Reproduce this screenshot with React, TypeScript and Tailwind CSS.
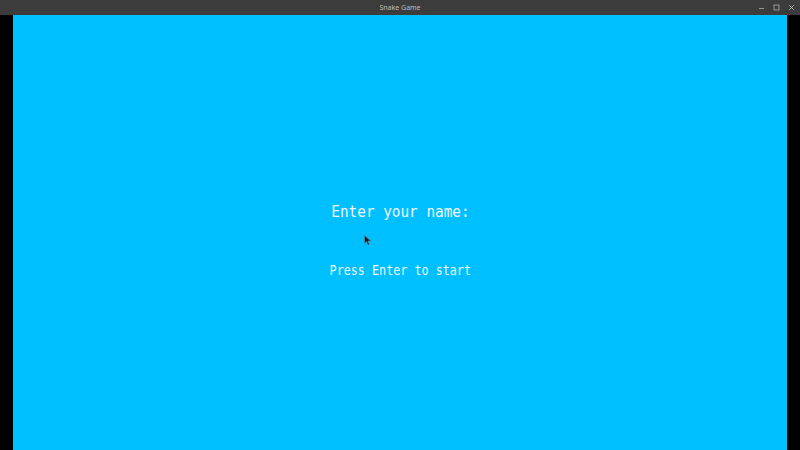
import React from "react";

export default function App() {
  return (
    <div className="w-[800px] h-[450px] flex flex-col bg-black overflow-hidden">
      <div className="h-[15px] bg-[#3c3c3c] relative flex items-center justify-center">
        <span className="text-[7px] leading-[15px] text-[#bdbdbd] font-['Noto_Sans',sans-serif]">Snake Game</span>
        <div className="absolute right-0 top-0 h-[15px] flex items-center gap-[8px] pr-[5px]">
          <svg width="7" height="7" viewBox="0 0 7 7"><path d="M1 4.5h5" stroke="#aaa" strokeWidth="0.8" /></svg>
          <svg width="7" height="7" viewBox="0 0 7 7"><rect x="1" y="1" width="5" height="5" fill="none" stroke="#aaa" strokeWidth="0.8" /></svg>
          <svg width="7" height="7" viewBox="0 0 7 7"><path d="M1.2 1.2l4.6 4.6M5.8 1.2l-4.6 4.6" stroke="#bbb" strokeWidth="0.9" /></svg>
        </div>
      </div>
      <div className="flex-1 flex px-[13px]">
        <div className="flex-1 bg-[#00bfff] flex flex-col items-center pt-[187px] relative font-['DejaVu_Sans_Mono',monospace] text-[#f0f8ff]">
          <div className="text-[16.5px] leading-[20px] scale-x-[0.87]">Enter your name:</div>
          <div className="mt-[40px] text-[13.5px] leading-[16px] scale-x-[0.87]">Press Enter to start</div>
          <svg className="absolute left-[351px] top-[220px]" width="8" height="11" viewBox="0 0 8 11">
            <path d="M0.5 0.5v8l2-2 1.5 3.5 1.3-.6-1.5-3.4h3z" fill="#1a1a1a" stroke="#5a8ea8" strokeWidth="0.6" />
          </svg>
        </div>
      </div>
    </div>
  );
}
